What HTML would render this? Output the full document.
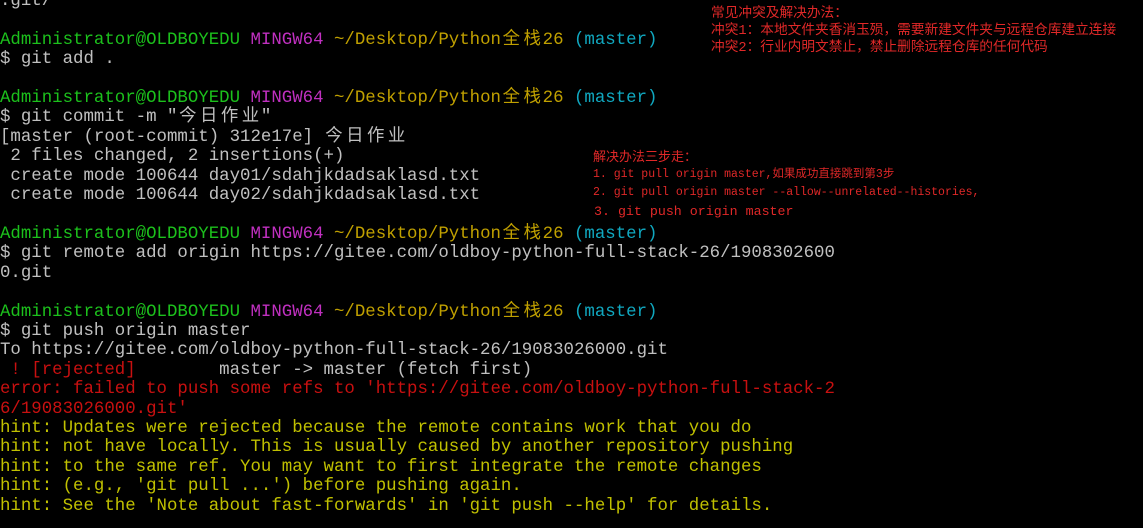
<!DOCTYPE html>
<html><head><meta charset="utf-8"><style>
html,body{margin:0;padding:0;background:#000;width:1143px;height:528px;overflow:hidden;}
.t{position:absolute;left:0;top:-8px;font-family:"Liberation Mono","Noto Sans CJK SC",monospace;font-size:17.4px;line-height:19.4px;color:#c0c0c0;white-space:pre;}
.c{display:inline-block;width:2ch;text-align:center;}
.g{color:#1cc01c}.m{color:#c030c0}.y{color:#c0a000}.cy{color:#10a8c0}.r{color:#c81010}.h{color:#c0c000}
.a{position:absolute;color:#e02828;font-family:"Liberation Mono","Noto Sans CJK SC",monospace;white-space:pre;}
</style></head><body>
<div class="t">.git/

<span class="g">Administrator@OLDBOYEDU</span> <span class="m">MINGW64</span> <span class="y">~/Desktop/Python<span class="c">全</span><span class="c">栈</span>26</span> <span class="cy">(master)</span>
$ git add .

<span class="g">Administrator@OLDBOYEDU</span> <span class="m">MINGW64</span> <span class="y">~/Desktop/Python<span class="c">全</span><span class="c">栈</span>26</span> <span class="cy">(master)</span>
$ git commit -m "<span class="c">今</span><span class="c">日</span><span class="c">作</span><span class="c">业</span>"
[master (root-commit) 312e17e] <span class="c">今</span><span class="c">日</span><span class="c">作</span><span class="c">业</span>
 2 files changed, 2 insertions(+)
 create mode 100644 day01/sdahjkdadsaklasd.txt
 create mode 100644 day02/sdahjkdadsaklasd.txt

<span class="g">Administrator@OLDBOYEDU</span> <span class="m">MINGW64</span> <span class="y">~/Desktop/Python<span class="c">全</span><span class="c">栈</span>26</span> <span class="cy">(master)</span>
$ git remote add origin https://gitee.com/oldboy-python-full-stack-26/1908302600
0.git

<span class="g">Administrator@OLDBOYEDU</span> <span class="m">MINGW64</span> <span class="y">~/Desktop/Python<span class="c">全</span><span class="c">栈</span>26</span> <span class="cy">(master)</span>
$ git push origin master
To https://gitee.com/oldboy-python-full-stack-26/19083026000.git
<span class="r"> ! [rejected]</span>        master -> master (fetch first)
<span class="r">error: failed to push some refs to 'https://gitee.com/oldboy-python-full-stack-2
6/19083026000.git'</span>
<span class="h">hint: Updates were rejected because the remote contains work that you do
hint: not have locally. This is usually caused by another repository pushing
hint: to the same ref. You may want to first integrate the remote changes
hint: (e.g., 'git pull ...') before pushing again.
hint: See the 'Note about fast-forwards' in 'git push --help' for details.</span></div>
<div class="a" style="left:711px;top:6px;font-size:13.7px;line-height:17px;">常见冲突及解决办法：
冲突1：本地文件夹香消玉殒，需要新建文件夹与远程仓库建立连接
冲突2：行业内明文禁止，禁止删除远程仓库的任何代码</div>
<div class="a" style="left:593px;top:149px;font-size:13px;line-height:17px;">解决办法三步走：</div>
<div class="a" style="left:593px;top:166px;font-size:11.5px;line-height:18px;">1. git pull origin master,如果成功直接跳到第3步
2. git pull origin master --allow--unrelated--histories,</div>
<div class="a" style="left:594px;top:203px;font-size:13.3px;line-height:17px;">3. git push origin master</div>
</body></html>
